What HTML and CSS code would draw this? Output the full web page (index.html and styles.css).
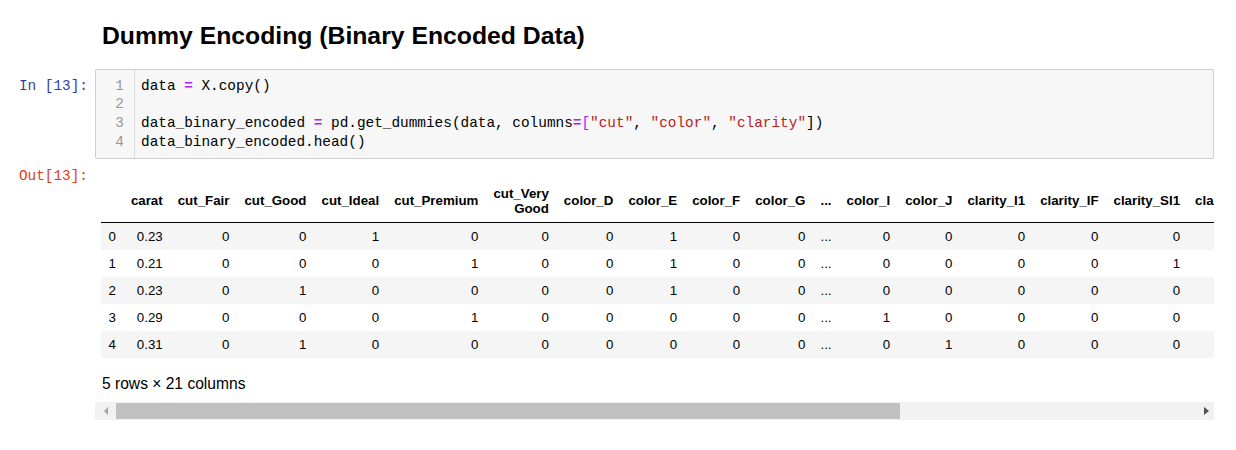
FILE: index.html
```html
<!DOCTYPE html>
<html>
<head>
<meta charset="utf-8">
<link rel="stylesheet" href="styles.css">
</head>
<body>
<div class="notebook">
  <div class="cell md-cell">
    <div class="prompt"></div>
    <div class="md-body"><h2 class="md-title">Dummy Encoding (Binary Encoded Data)</h2></div>
  </div>

  <div class="cell code-cell">
    <div class="prompt in-prompt">In&nbsp;[13]:</div>
    <div class="input-box">
      <div class="gutter">
        <div class="ln">1</div><div class="ln">2</div><div class="ln">3</div><div class="ln">4</div>
      </div>
      <div class="code">
        <div class="cl">data <span class="op">=</span> X.copy()</div>
        <div class="cl">&nbsp;</div>
        <div class="cl">data_binary_encoded <span class="op">=</span> pd.get_dummies(data, columns<span class="op">=</span><span class="br">[</span><span class="str">"cut"</span>, <span class="str">"color"</span>, <span class="str">"clarity"</span>])</div>
        <div class="cl">data_binary_encoded.head()</div>
      </div>
    </div>
  </div>

  <div class="cell out-cell">
    <div class="prompt out-prompt">Out[13]:</div>
    <div class="output">
      <div class="scroll-content">
        <table class="df">
          <thead>
            <tr><th></th><th>carat</th><th>cut_Fair</th><th>cut_Good</th><th>cut_Ideal</th><th>cut_Premium</th><th>cut_Very Good</th><th>color_D</th><th>color_E</th><th>color_F</th><th>color_G</th><th>...</th><th>color_I</th><th>color_J</th><th>clarity_I1</th><th>clarity_IF</th><th>clarity_SI1</th><th>clarity_SI2</th><th>clarity_VS1</th><th>clarity_VS2</th><th>clarity_VVS1</th><th>clarity_VVS2</th></tr>
          </thead>
          <tbody>
            <tr><th>0</th><td>0.23</td><td>0</td><td>0</td><td>1</td><td>0</td><td>0</td><td>0</td><td>1</td><td>0</td><td>0</td><td>...</td><td>0</td><td>0</td><td>0</td><td>0</td><td>0</td><td>1</td><td>0</td><td>0</td><td>0</td><td>0</td></tr>
            <tr><th>1</th><td>0.21</td><td>0</td><td>0</td><td>0</td><td>1</td><td>0</td><td>0</td><td>1</td><td>0</td><td>0</td><td>...</td><td>0</td><td>0</td><td>0</td><td>0</td><td>1</td><td>0</td><td>0</td><td>0</td><td>0</td><td>0</td></tr>
            <tr><th>2</th><td>0.23</td><td>0</td><td>1</td><td>0</td><td>0</td><td>0</td><td>0</td><td>1</td><td>0</td><td>0</td><td>...</td><td>0</td><td>0</td><td>0</td><td>0</td><td>0</td><td>0</td><td>1</td><td>0</td><td>0</td><td>0</td></tr>
            <tr><th>3</th><td>0.29</td><td>0</td><td>0</td><td>0</td><td>1</td><td>0</td><td>0</td><td>0</td><td>0</td><td>0</td><td>...</td><td>1</td><td>0</td><td>0</td><td>0</td><td>0</td><td>0</td><td>0</td><td>1</td><td>0</td><td>0</td></tr>
            <tr><th>4</th><td>0.31</td><td>0</td><td>1</td><td>0</td><td>0</td><td>0</td><td>0</td><td>0</td><td>0</td><td>0</td><td>...</td><td>0</td><td>1</td><td>0</td><td>0</td><td>0</td><td>1</td><td>0</td><td>0</td><td>0</td><td>0</td></tr>
          </tbody>
        </table>
        <p class="shape">5 rows × 21 columns</p>
      </div>
      <div class="hscroll">
        <div class="sb-btn sb-left"><span class="tri-left"></span></div>
        <div class="sb-track"><div class="sb-thumb"></div></div>
        <div class="sb-btn sb-right"><span class="tri-right"></span></div>
      </div>
    </div>
  </div>
</div>
</body>
</html>
```

FILE: styles.css
```css
html, body {
  margin: 0;
  padding: 0;
  background: #fff;
}
body {
  font-family: "Liberation Sans", Arial, sans-serif;
  color: #000;
  width: 1236px;
  overflow: hidden;
}
.notebook {
  width: 1214px;
  padding-top: 21px;
}
.cell {
  display: flex;
  align-items: flex-start;
}
.prompt {
  width: 88px;
  flex: 0 0 88px;
  padding-right: 7px;
  text-align: right;
  font-family: "Liberation Mono", monospace;
  font-size: 14.4px;
  line-height: 18.7px;
  white-space: nowrap;
}
.md-body {
  flex: 1;
  padding-left: 7px;
}
.md-title {
  margin: 0;
  font-size: 24.75px;
  line-height: 30px;
  font-weight: bold;
}
.code-cell {
  margin-top: 18px;
}
.in-prompt {
  color: #303F9F;
  padding-top: 7.5px;
}
.input-box {
  flex: 1;
  display: flex;
  border: 1px solid #cfcfcf;
  border-radius: 2px;
  background: #f7f7f7;
  box-sizing: border-box;
  height: 90px;
}
.gutter {
  width: 39px;
  flex: 0 0 39px;
  border-right: 1px solid #ddd;
  padding: 6.5px 10px 6.5px 0;
  box-sizing: border-box;
  text-align: right;
  font-family: "Liberation Mono", monospace;
  font-size: 14.4px;
  line-height: 18.7px;
  color: #999;
}
.code {
  padding: 6.5px 0 6.5px 6px;
  font-family: "Liberation Mono", monospace;
  font-size: 14.4px;
  line-height: 18.7px;
  color: #000;
}
.cl {
  white-space: pre;
}
.op {
  color: #AA22FF;
  font-weight: bold;
}
.br {
  color: #AA22FF;
}
.str {
  color: #BA2121;
}
.out-prompt {
  color: #D84315;
  padding-top: 7.5px;
}
.output {
  flex: 1;
  min-width: 0;
  display: flex;
  flex-direction: column;
}
.scroll-content {
  overflow: hidden;
  padding: 6px 6px 8px 6px;
}
.df {
  margin-top: 14.5px;
  border-collapse: collapse;
  border-spacing: 0;
  font-size: 13.3px;
  color: #000;
}
.df th, .df td {
  text-align: right;
  vertical-align: middle;
  padding: 6px 7.5px;
  line-height: normal;
  white-space: normal;
}
.df thead th {
  font-weight: bold;
  border-bottom: 1px solid #000;
}
.df tbody th {
  font-weight: normal;
}
.df tbody tr:nth-child(odd) {
  background: #f5f5f5;
}
.shape {
  margin: 16.5px 0 0 1px;
  font-size: 15.6px;
  line-height: 19.8px;
}
.hscroll {
  display: flex;
  height: 18px;
  background: #f1f1f1;
}
.sb-btn {
  width: 17px;
  flex: 0 0 17px;
  display: flex;
  align-items: center;
  justify-content: center;
}
.sb-left {
  width: 21px;
  flex: 0 0 21px;
}
.sb-track {
  flex: 1;
  padding: 1px 0;
  box-sizing: border-box;
}
.sb-thumb {
  width: 784px;
  height: 16px;
  background: #c1c1c1;
}
.tri-left {
  width: 0;
  height: 0;
  border-top: 4px solid transparent;
  border-bottom: 4px solid transparent;
  border-right: 4px solid #a3a3a3;
}
.tri-right {
  width: 0;
  height: 0;
  border-top: 4.5px solid transparent;
  border-bottom: 4.5px solid transparent;
  border-left: 5px solid #505050;
  margin-left: 2px;
}
```
